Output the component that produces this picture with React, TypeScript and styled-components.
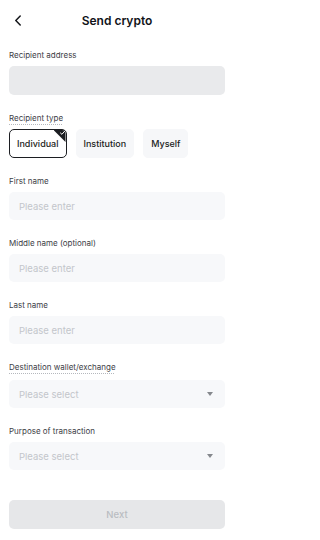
import React from 'react'
import styled, { createGlobalStyle } from 'styled-components'

const GlobalStyle = createGlobalStyle`
  body {
    margin: 0;
    background: #ffffff;
    font-family: Inter, 'Noto Sans', sans-serif;
    -webkit-font-smoothing: antialiased;
  }
`

const Screen = styled.div`
  width: 234px;
  min-height: 540px;
  background: #fff;
  display: flex;
  flex-direction: column;
`

const Header = styled.header`
  position: relative;
  height: 40px;
  display: flex;
  align-items: center;
  justify-content: center;
`

const BackButton = styled.button`
  position: absolute;
  left: 11px;
  top: 13px;
  width: 14px;
  height: 14px;
  padding: 0;
  border: 0;
  background: none;
  display: flex;
  align-items: center;
  justify-content: center;
`

const Title = styled.h1`
  margin: 0;
  font-size: 12px;
  font-weight: 600;
  color: #111318;
`

const Form = styled.div`
  padding: 9px 9px 0;
  display: flex;
  flex-direction: column;
`

const Field = styled.div<{ $gap?: number }>`
  display: flex;
  flex-direction: column;
  gap: ${(p) => p.$gap ?? 5}px;
  margin-bottom: 17px;
`

const Label = styled.span<{ $dotted?: boolean }>`
  align-self: flex-start;
  font-size: 8px;
  line-height: 12px;
  color: #3d4046;
  text-decoration: ${(p) => (p.$dotted ? 'underline dotted #b5b8bd' : 'none')};
  text-underline-offset: 3px;
`

const Box = styled.div<{ $tone?: 'dark' | 'light' }>`
  height: 28px;
  border-radius: 5px;
  background: ${(p) => (p.$tone === 'dark' ? '#e9eaec' : '#f7f8fa')};
  display: flex;
  align-items: center;
  justify-content: space-between;
  padding: 0 12px 0 10px;
`

const Placeholder = styled.span`
  font-size: 9.5px;
  color: #c3c6cb;
`

const Caret = styled.span`
  width: 0;
  height: 0;
  border-left: 3.5px solid transparent;
  border-right: 3.5px solid transparent;
  border-top: 4px solid #85888d;
`

const Tabs = styled.div`
  display: flex;
  gap: 9px;
`

const Tab = styled.button<{ $active?: boolean }>`
  position: relative;
  overflow: hidden;
  height: 29px;
  padding: 0 7px;
  border-radius: 5px;
  border: 1px solid ${(p) => (p.$active ? '#1c1e22' : '#f6f7f9')};
  background: ${(p) => (p.$active ? '#ffffff' : '#f6f7f9')};
  font-family: inherit;
  font-size: 9px;
  font-weight: 500;
  color: #1c1e22;
`

const Corner = styled.span`
  position: absolute;
  top: 0;
  right: 0;
  width: 12px;
  height: 12px;
  background: #1c1e22;
  clip-path: polygon(0 0, 100% 0, 100% 100%);
  display: flex;
  justify-content: flex-end;
  align-items: flex-start;
`

const NextButton = styled.button`
  margin-top: 13px;
  height: 29px;
  border: 0;
  border-radius: 5px;
  background: #e6e7e9;
  font-family: inherit;
  font-size: 9.5px;
  font-weight: 500;
  color: #b9bcc1;
`

const TextField = ({ label }: { label: string }) => (
  <Field>
    <Label>{label}</Label>
    <Box>
      <Placeholder>Please enter</Placeholder>
    </Box>
  </Field>
)

const SelectField = ({ label, dotted }: { label: string; dotted?: boolean }) => (
  <Field $gap={dotted ? 7 : 5}>
    <Label $dotted={dotted}>{label}</Label>
    <Box>
      <Placeholder>Please select</Placeholder>
      <Caret />
    </Box>
  </Field>
)

export default function App() {
  return (
    <Screen>
      <GlobalStyle />
      <Header>
        <BackButton aria-label="Back">
          <svg width="8" height="11" viewBox="0 0 8 11" fill="none">
            <path
              d="M6.2 1 L1.8 5.5 L6.2 10"
              stroke="#16181c"
              strokeWidth="1.5"
              strokeLinecap="round"
              strokeLinejoin="round"
            />
          </svg>
        </BackButton>
        <Title>Send crypto</Title>
      </Header>
      <Form>
        <Field>
          <Label>Recipient address</Label>
          <Box $tone="dark" style={{ height: 29 }} />
        </Field>
        <Field>
          <Label $dotted>Recipient type</Label>
          <Tabs>
            <Tab $active>
              Individual
              <Corner>
                <svg width="7" height="6" viewBox="0 0 7 6" fill="none">
                  <path
                    d="M1.5 3 L2.9 4.3 L5.6 1.3"
                    stroke="#fff"
                    strokeWidth="1"
                    strokeLinecap="round"
                    strokeLinejoin="round"
                  />
                </svg>
              </Corner>
            </Tab>
            <Tab>Institution</Tab>
            <Tab>Myself</Tab>
          </Tabs>
        </Field>
        <TextField label="First name" />
        <TextField label="Middle name (optional)" />
        <TextField label="Last name" />
        <SelectField label="Destination wallet/exchange" dotted />
        <SelectField label="Purpose of transaction" />
        <NextButton disabled>Next</NextButton>
      </Form>
    </Screen>
  )
}
